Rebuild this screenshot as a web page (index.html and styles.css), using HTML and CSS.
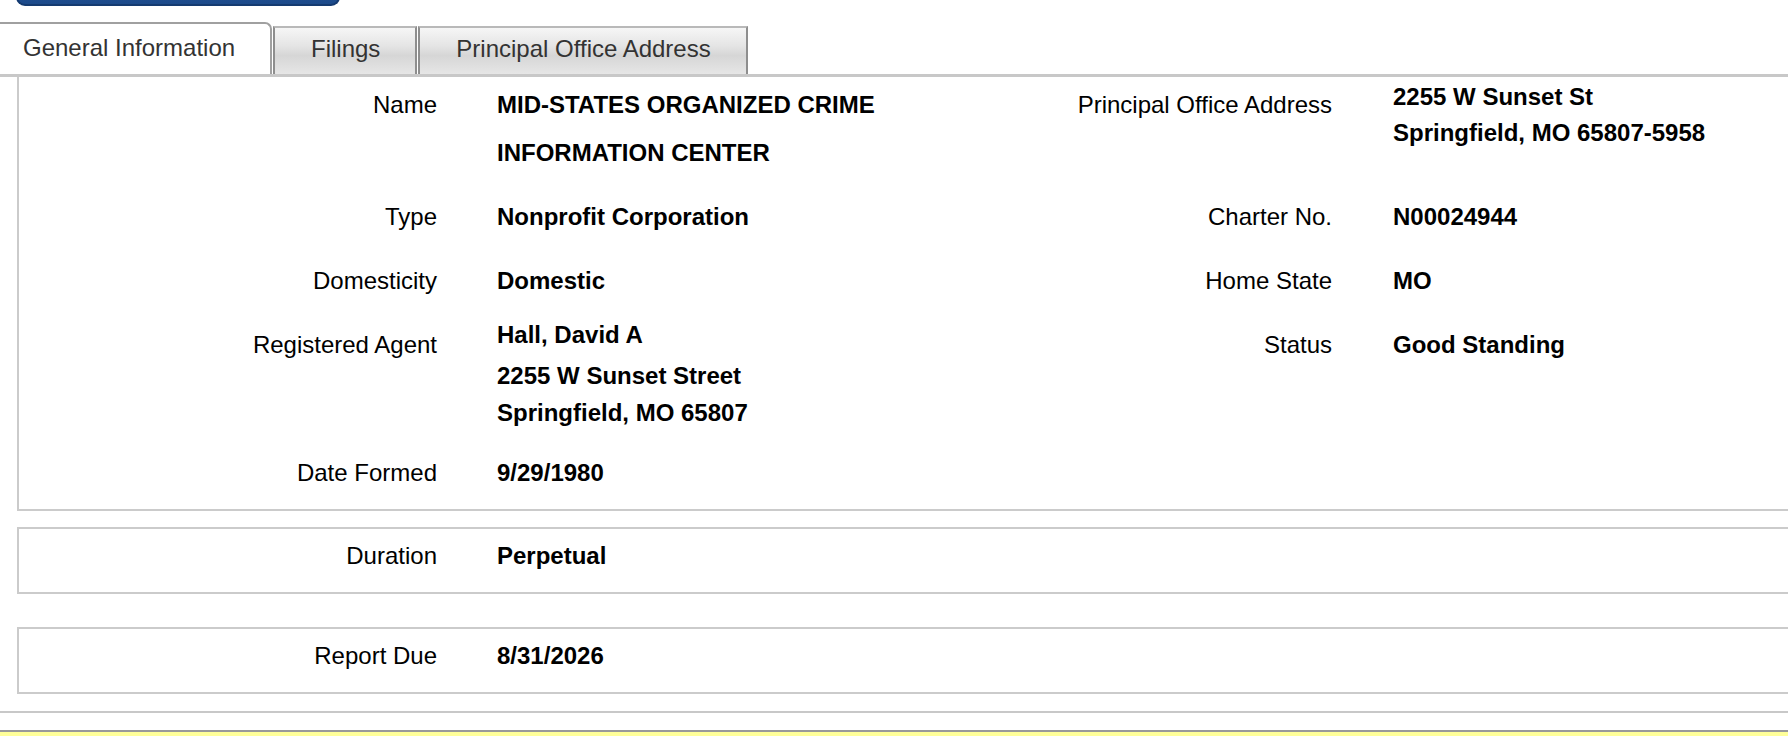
FILE: index.html
```html
<!DOCTYPE html>
<html lang="en">
<head>
<meta charset="utf-8">
<title>Business Entity Details</title>
<link rel="stylesheet" href="styles.css">
</head>
<body>
<div class="topbtn"></div>
<div class="tabs">
  <div class="tab tab-active">General Information</div>
  <div class="tab">Filings</div>
  <div class="tab">Principal Office Address</div>
</div>
<div class="panel">
  <div class="box box-first">
    <div class="grid">
      <div class="lbl lbl-r1">Name</div>
      <div class="val val-name">MID-STATES ORGANIZED CRIME INFORMATION CENTER</div>
      <div class="lbl lbl-r1">Principal Office Address</div>
      <div class="val val-poa">2255 W Sunset St<br>Springfield, MO 65807-5958</div>

      <div class="lbl">Type</div>
      <div class="val">Nonprofit Corporation</div>
      <div class="lbl">Charter No.</div>
      <div class="val">N00024944</div>

      <div class="lbl">Domesticity</div>
      <div class="val">Domestic</div>
      <div class="lbl">Home State</div>
      <div class="val">MO</div>

      <div class="lbl">Registered Agent</div>
      <div class="val val-agent">
        <div class="agent-name">Hall, David A</div>
        <div class="agent-addr">2255 W Sunset Street<br>Springfield, MO 65807</div>
      </div>
      <div class="lbl">Status</div>
      <div class="val">Good Standing</div>

      <div class="lbl">Date Formed</div>
      <div class="val">9/29/1980</div>
      <div class="lbl"></div>
      <div class="val"></div>
    </div>
  </div>
  <div class="box box-dur">
    <div class="grid">
      <div class="lbl lbl-single">Duration</div>
      <div class="val val-single">Perpetual</div>
    </div>
  </div>
  <div class="box box-rep">
    <div class="grid">
      <div class="lbl lbl-single">Report Due</div>
      <div class="val val-single">8/31/2026</div>
    </div>
  </div>
</div>
<div class="notice"></div>
</body>
</html>
```
FILE: styles.css
```css
* { box-sizing: border-box; }
html, body { overflow: hidden; }
body {
  margin: 0;
  font-family: "Liberation Sans", Arial, Helvetica, sans-serif;
  font-size: 24px;
  color: #000;
  background: #fff;
}
.topbtn {
  margin-top: -34px;
  margin-left: 16px;
  width: 324px;
  height: 40px;
  background: linear-gradient(#2b5da2, #1c4a8a);
  border: 2px solid #143a70;
  border-top: none;
  border-radius: 0 0 9px 9px;
}
.tabs {
  display: flex;
  align-items: flex-end;
  margin-top: 16px;
  height: 52px;
}
.tab {
  color: #333;
  white-space: nowrap;
  height: 48px;
  line-height: 41px;
  padding: 0 35px 5px 36px;
  background: linear-gradient(#f6f6f6 0%, #e4e4e4 40%, #d6d6d6 60%, #e6e6e6 100%);
  border-top: 2px solid #b9b9b9;
  border-left: 2px solid #8e8e8e;
  border-right: 2px solid #8e8e8e;
  margin-left: 1px;
}
.tab-active {
  margin-left: 0;
  width: 272px;
  height: 52px;
  line-height: 48px;
  padding: 0 0 2px 23px;
  background: #fff;
  border-left: none;
  border-top: 2px solid #a0a0a0;
  border-right: 2px solid #a0a0a0;
  border-top-right-radius: 7px;
}
.panel {
  border-top: 3px solid #c8c8c8;
  border-bottom: 2px solid #c8c8c8;
  padding-bottom: 17px;
}
.box {
  margin-left: 17px;
  margin-right: -20px;
  border: 2px solid #cbcbcb;
}
.box-first {
  border-top: none;
  padding-bottom: 4px;
}
.box-dur { margin-top: 16px; }
.box-rep { margin-top: 33px; }
.grid {
  display: grid;
  grid-template-columns: 418px 480px 415px 1fr;
  align-items: start;
}
.lbl {
  text-align: right;
  line-height: 36px;
  padding: 14px 0;
  white-space: nowrap;
}
.val {
  font-weight: bold;
  line-height: 36px;
  padding: 14px 0 14px 60px;
}
.grid > .val:nth-child(4n) { padding-left: 61px; }
.lbl-r1 { padding-top: 10px; }
.val-name {
  line-height: 48px;
  padding-top: 4px;
  padding-bottom: 8px;
}
.val-poa { padding-top: 2px; }
.val-agent { padding-top: 4px; padding-bottom: 10px; }
.agent-name { margin-bottom: 4px; }
.agent-addr { line-height: 37px; }
.box-dur .lbl-single, .box-dur .val-single { padding-top: 9px; padding-bottom: 18px; }
.box-rep .lbl-single, .box-rep .val-single { padding-top: 9px; padding-bottom: 18px; }
.notice {
  margin-top: 17px;
  height: 40px;
  background: #ffff99;
  border-top: 2px solid #999;
}
```
